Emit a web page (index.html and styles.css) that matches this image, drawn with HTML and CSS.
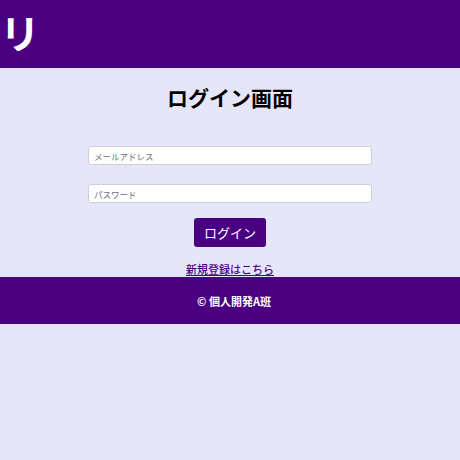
FILE: index.html
```html
<!DOCTYPE html>
<html lang="ja">
<head>
<meta charset="utf-8">
<link rel="stylesheet" href="styles.css">
</head>
<body>
<header class="site-header"><span class="logo">リ</span></header>
<main class="login">
  <h1 class="title">ログイン画面</h1>
  <form class="form">
    <input class="field" type="email" placeholder="メールアドレス">
    <input class="field" type="password" placeholder="パスワード">
    <button class="btn" type="button">ログイン</button>
  </form>
  <a class="register" href="#">新規登録はこちら</a>
</main>
<footer class="site-footer">© 個人開発A班</footer>
</body>
</html>
```
FILE: styles.css
```css
html, body {
  margin: 0;
  padding: 0;
  background: #e6e6fa;
  font-family: "Noto Sans CJK JP", "Noto Sans", sans-serif;
}
.site-header {
  background: #4b0082;
  height: 68px;
  display: flex;
  align-items: center;
}
.logo {
  color: #fff;
  font-size: 40px;
  font-weight: bold;
  line-height: 1;
  margin-left: 0;
  margin-top: -4px;
}
.login {
  display: flex;
  flex-direction: column;
  align-items: center;
}
.title {
  margin: 17px 0 36px;
  font-size: 21px;
  line-height: 25px;
  font-weight: bold;
  color: #000;
}
.form {
  display: flex;
  flex-direction: column;
  align-items: center;
  width: 284px;
}
.field {
  box-sizing: border-box;
  width: 284px;
  height: 19px;
  margin: 0 0 19px;
  padding: 0 5px;
  border: 1px solid #cfcfd6;
  border-radius: 3px;
  background: #fff;
  font-family: "Noto Sans CJK JP", sans-serif;
  font-size: 8.5px;
  outline: none;
}
.field:last-of-type {
  margin-bottom: 15px;
}
.field::placeholder {
  color: #6e6e78;
}
.btn {
  width: 72px;
  height: 29px;
  border: none;
  border-radius: 3px;
  background: #4b0082;
  color: #fff;
  font-family: "Noto Sans CJK JP", sans-serif;
  font-size: 13px;
  padding: 0;
}
.register {
  margin-top: 14px;
  font-size: 11px;
  line-height: 16px;
  font-weight: 500;
  color: #4b0082;
  text-decoration: underline;
}
.site-footer {
  background: #4b0082;
  height: 47px;
  display: flex;
  align-items: center;
  justify-content: center;
  padding-left: 8px;
  color: #fff;
  font-size: 11px;
  font-weight: bold;
}
```
